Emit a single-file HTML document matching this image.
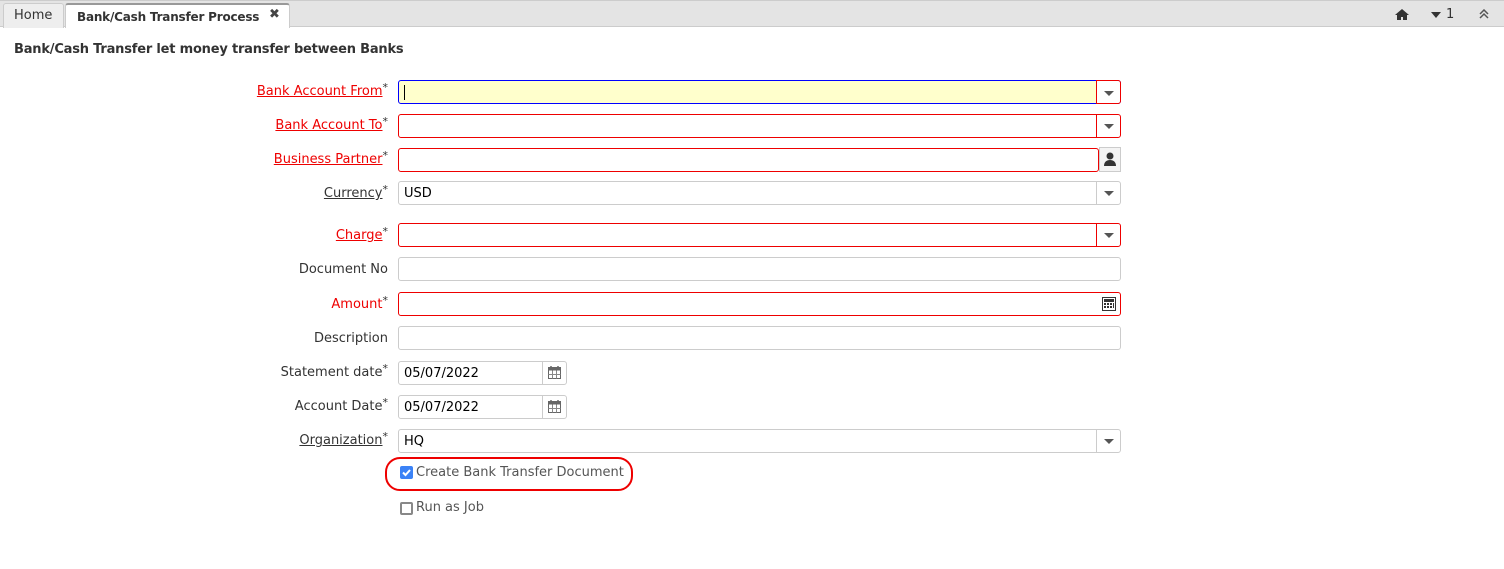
<!DOCTYPE html><html><head><style>
body{margin:0;width:1504px;height:569px;background:#fff;font-family:"DejaVu Sans","Liberation Sans",sans-serif;font-size:13px;color:#333;position:relative;overflow:hidden}
.abs{position:absolute}
.bar{left:0;top:0;width:1504px;height:27px;background:#e4e4e4;border-top:1px solid #ccc;border-bottom:1px solid #ccc;box-sizing:border-box}
.tab{top:3px;height:25px;box-sizing:border-box;border:1px solid #ccc;border-bottom:none;border-radius:3px 3px 0 0;line-height:24px;font-size:13px;white-space:nowrap}
.lbl{right:1116px;text-align:right;font-size:13px;color:#333;white-space:nowrap}
.req{color:#e00;text-decoration:underline}
.und{text-decoration:underline}
.star{position:relative;top:-4px;font-size:11px;color:#333}
.inp{left:398px;width:723px;height:24px;box-sizing:border-box;border:1px solid #ccc;border-radius:3px;background:#fff;line-height:24px;padding-left:5px;font-size:13px;color:#000}
.red{border-color:#e00}
.btn{position:absolute;right:0;top:-1px;width:24px;height:24px;box-sizing:border-box;border-left:1px solid #ccc}
.red .btn{border-left-color:#e00}
.tri{position:absolute;left:7px;top:10px;width:0;height:0;border-left:5px solid transparent;border-right:5px solid transparent;border-top:5px solid #555}
</style></head><body>
<div class="abs bar"></div>
<div class="abs tab" style="left:3px;width:61px;background:#eee;padding-left:10px;color:#333">Home</div>
<div class="abs tab" style="left:65px;width:225px;background:#fff;padding-left:11px;font-weight:bold;color:#333;border-top:2px solid #999;font-size:12px;letter-spacing:-0.2px">Bank/Cash Transfer Process</div>
<div class="abs" style="left:269px;top:7px;font-size:13px;font-weight:bold;color:#444">✖</div>
<svg class="abs" style="left:1395px;top:9px" width="14" height="11" viewBox="0 0 14 11"><path d="M7 0L0 6h2v5h4V8h2v3h4V6h2L7 0z" fill="#333"/></svg>
<div class="abs" style="left:1431px;top:12px;width:0;height:0;border-left:5px solid transparent;border-right:5px solid transparent;border-top:6px solid #333"></div>
<div class="abs" style="left:1446px;top:7px;font-size:13px;color:#333">1</div>
<svg class="abs" style="left:1479px;top:9px" width="10" height="10" viewBox="0 0 10 10"><path d="M1 5l4-4 4 4M1 9l4-4 4 4" stroke="#555" stroke-width="1.5" fill="none"/></svg>
<div class="abs" style="left:14px;top:42px;font-weight:bold;font-size:13px;color:#333;letter-spacing:-0.2px">Bank/Cash Transfer let money transfer between Banks</div>

<div class="abs lbl" style="top:84px"><span class="req">Bank Account From</span><span class="star">*</span></div>
<div class="abs inp red" style="top:80px;background:#ffffcc;border-color:#00f"><span style="border-left:1px solid #000;margin-left:0">&nbsp;</span><div class="btn" style="border:1px solid #e00;right:-1px;width:25px;background:#fff;border-radius:0 3px 3px 0"><div class="tri"></div></div></div>
<div class="abs lbl" style="top:118px"><span class="req">Bank Account To</span><span class="star">*</span></div>
<div class="abs inp red" style="top:114px"><div class="btn"><div class="tri"></div></div></div>
<div class="abs lbl" style="top:152px"><span class="req">Business Partner</span><span class="star">*</span></div>
<div class="abs inp red" style="top:148px;width:701px"></div>
<div class="abs" style="left:1099px;top:147px;width:22px;height:25px;box-sizing:border-box;border:1px solid #ccc;background:#f4f4f4"><svg width="20" height="23" viewBox="0 0 20 23"><circle cx="10" cy="8" r="3.5" fill="#333"/><path d="M4 18c0-4 2.5-6 6-6s6 2 6 6z" fill="#333"/></svg></div>
<div class="abs lbl" style="top:186px"><span class="und">Currency</span><span class="star">*</span></div>
<div class="abs inp" style="top:181px">USD<div class="btn"><div class="tri"></div></div></div>
<div class="abs lbl" style="top:228px"><span class="req">Charge</span><span class="star">*</span></div>
<div class="abs inp red" style="top:223px"><div class="btn"><div class="tri"></div></div></div>
<div class="abs lbl" style="top:262px;right:1116px">Document No</div>
<div class="abs inp" style="top:257px"></div>
<div class="abs lbl" style="top:297px"><span style="color:#e00">Amount</span><span class="star">*</span></div>
<div class="abs inp red" style="top:292px"><svg style="position:absolute;right:4px;top:4px" width="14" height="14" viewBox="0 0 14 14"><rect x="0.5" y="0.5" width="13" height="13" fill="none" stroke="#333"/><rect x="2" y="2" width="10" height="3" fill="#333"/><g fill="#333"><rect x="2" y="6" width="2" height="2"/><rect x="5" y="6" width="2" height="2"/><rect x="8" y="6" width="2" height="2"/><rect x="2" y="9" width="2" height="2"/><rect x="5" y="9" width="2" height="2"/><rect x="8" y="9" width="2" height="2"/><rect x="11" y="6" width="1" height="5"/></g></svg></div>
<div class="abs lbl" style="top:331px">Description</div>
<div class="abs inp" style="top:326px"></div>
<div class="abs lbl" style="top:365px">Statement date<span class="star">*</span></div>
<div class="abs inp" style="top:361px;width:169px">05/07/2022<div class="btn"><svg style="position:absolute;left:5px;top:5px" width="13" height="13" viewBox="0 0 13 13"><rect x="0.5" y="1.5" width="12" height="11" fill="#fff" stroke="#666"/><rect x="0.5" y="1.5" width="12" height="3" fill="#666"/><path d="M3 0v3M10 0v3" stroke="#666" stroke-width="1.5"/><path d="M4.5 4.5v8M8.5 4.5v8M0.5 8.5h12" stroke="#888"/></svg></div></div>
<div class="abs lbl" style="top:399px">Account Date<span class="star">*</span></div>
<div class="abs inp" style="top:395px;width:169px">05/07/2022<div class="btn"><svg style="position:absolute;left:5px;top:5px" width="13" height="13" viewBox="0 0 13 13"><rect x="0.5" y="1.5" width="12" height="11" fill="#fff" stroke="#666"/><rect x="0.5" y="1.5" width="12" height="3" fill="#666"/><path d="M3 0v3M10 0v3" stroke="#666" stroke-width="1.5"/><path d="M4.5 4.5v8M8.5 4.5v8M0.5 8.5h12" stroke="#888"/></svg></div></div>
<div class="abs lbl" style="top:433px"><span class="und">Organization</span><span class="star">*</span></div>
<div class="abs inp" style="top:429px">HQ<div class="btn"><div class="tri"></div></div></div>
<div class="abs" style="left:385px;top:457px;width:244px;height:30px;border:2px solid #e00;border-radius:15px"></div>
<div class="abs" style="left:400px;top:466px;width:13px;height:13px;background:#3b82f6;border-radius:2px"><svg width="13" height="13" viewBox="0 0 13 13"><path d="M3 6.5l2.5 2.5 4.5-5" stroke="#fff" stroke-width="2" fill="none"/></svg></div>
<div class="abs" style="left:416px;top:465px;color:#555">Create Bank Transfer Document</div>
<div class="abs" style="left:400px;top:502px;width:13px;height:13px;box-sizing:border-box;border:2px solid #888;border-radius:2px"></div>
<div class="abs" style="left:416px;top:500px;color:#555">Run as Job</div>
</body></html>
